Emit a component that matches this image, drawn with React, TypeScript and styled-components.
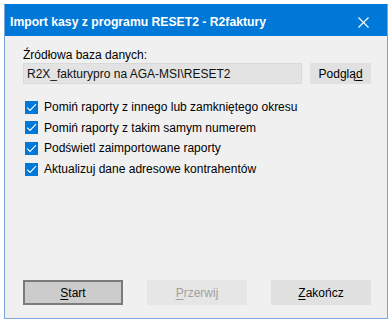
import styled, { createGlobalStyle } from "styled-components";

const GlobalStyle = createGlobalStyle`
  html, body {
    margin: 0;
    padding: 0;
    background: #fff;
  }
  body {
    font-family: "Liberation Sans", Arial, sans-serif;
    font-size: 12px;
    color: #000;
  }
`;

const Window = styled.div`
  margin: 4px 0 0 4px;
  width: 384px;
  height: 315px;
  box-sizing: border-box;
  border: 1px solid #7aa6dd;
  border-top-color: #0078d7;
  background: #f0f0f0;
  display: flex;
  flex-direction: column;
`;

const TitleBar = styled.div`
  height: 31px;
  background: #0078d7;
  color: #fff;
  display: flex;
  align-items: center;
  justify-content: space-between;
  padding: 3px 0 0 5px;
  box-sizing: border-box;
`;

const Title = styled.div`
  font-weight: bold;
  font-size: 12.2px;
`;

const CloseButton = styled.div`
  width: 46px;
  height: 28px;
  display: flex;
  align-items: center;
  justify-content: center;
  margin-right: 1px;
`;

const Body = styled.div`
  flex: 1;
  display: flex;
  flex-direction: column;
  padding: 12px 16px 13px 18px;
`;

const Label = styled.div`
  line-height: 14px;
  margin-bottom: 1px;
`;

const SourceRow = styled.div`
  display: flex;
  align-items: center;
  gap: 8px;
`;

const PathBox = styled.div`
  width: 280px;
  height: 21px;
  box-sizing: border-box;
  border: 1px solid #d9d9d9;
  background: #e3e3e3;
  padding: 0 3px;
  display: flex;
  align-items: center;
  color: #111;
`;

type Variant = "default" | "disabled" | "normal";

const Button = styled.div<{ $variant: Variant; $small?: boolean }>`
  width: ${(p) => (p.$small ? "61px" : "100px")};
  height: ${(p) => (p.$small ? "21px" : "25px")};
  box-sizing: border-box;
  display: flex;
  align-items: center;
  justify-content: center;
  background: ${(p) =>
    p.$variant === "default" ? "#cccccc" : p.$variant === "disabled" ? "#e6e6e6" : "#e1e1e1"};
  border: ${(p) => (p.$variant === "default" ? "2px solid #7a7a7a" : "none")};
  color: ${(p) => (p.$variant === "disabled" ? "#a0a0a0" : "#000")};
`;

const Options = styled.div`
  display: flex;
  flex-direction: column;
  gap: 6.7px;
  margin-top: 16px;
  padding-left: 2px;
`;

const CheckRow = styled.label`
  display: flex;
  align-items: center;
  gap: 6px;
  height: 14px;
`;

const Box = styled.span`
  width: 13px;
  height: 13px;
  background: #0078d7;
  display: flex;
  align-items: center;
  justify-content: center;
`;

const Footer = styled.div`
  margin-top: auto;
  display: flex;
  justify-content: space-between;
`;

const Key = styled.u`
  text-decoration-thickness: 1px;
  text-underline-offset: 2px;
`;

function Check({ children }: { children: React.ReactNode }) {
  return (
    <CheckRow>
      <Box>
        <svg width="13" height="13" viewBox="0 0 13 13">
          <path d="M2.2 6.6 L5 9.4 L11 3.2" fill="none" stroke="#fff" strokeWidth="1.1" />
        </svg>
      </Box>
      <span>{children}</span>
    </CheckRow>
  );
}

export default function App() {
  return (
    <>
      <GlobalStyle />
      <Window>
        <TitleBar>
          <Title>Import kasy z programu RESET2 - R2faktury</Title>
          <CloseButton>
            <svg width="11" height="11" viewBox="0 0 11 11">
              <path d="M0.5 0.5 L10.5 10.5 M10.5 0.5 L0.5 10.5" stroke="#fff" strokeWidth="1.1" />
            </svg>
          </CloseButton>
        </TitleBar>
        <Body>
          <Label>Źródłowa baza danych:</Label>
          <SourceRow>
            <PathBox>R2X_fakturypro na AGA-MSI\RESET2</PathBox>
            <Button $small $variant="normal">
              <span>
                Podglą<Key>d</Key>
              </span>
            </Button>
          </SourceRow>
          <Options>
            <Check>Pomiń raporty z innego lub zamkniętego okresu</Check>
            <Check>Pomiń raporty z takim samym numerem</Check>
            <Check>Podświetl zaimportowane raporty</Check>
            <Check>Aktualizuj dane adresowe kontrahentów</Check>
          </Options>
          <Footer>
            <Button $variant="default">
              <span>
                <Key>S</Key>tart
              </span>
            </Button>
            <Button $variant="disabled">
              <span>
                <Key>P</Key>rzerwij
              </span>
            </Button>
            <Button $variant="normal">
              <span>
                <Key>Z</Key>akończ
              </span>
            </Button>
          </Footer>
        </Body>
      </Window>
    </>
  );
}
